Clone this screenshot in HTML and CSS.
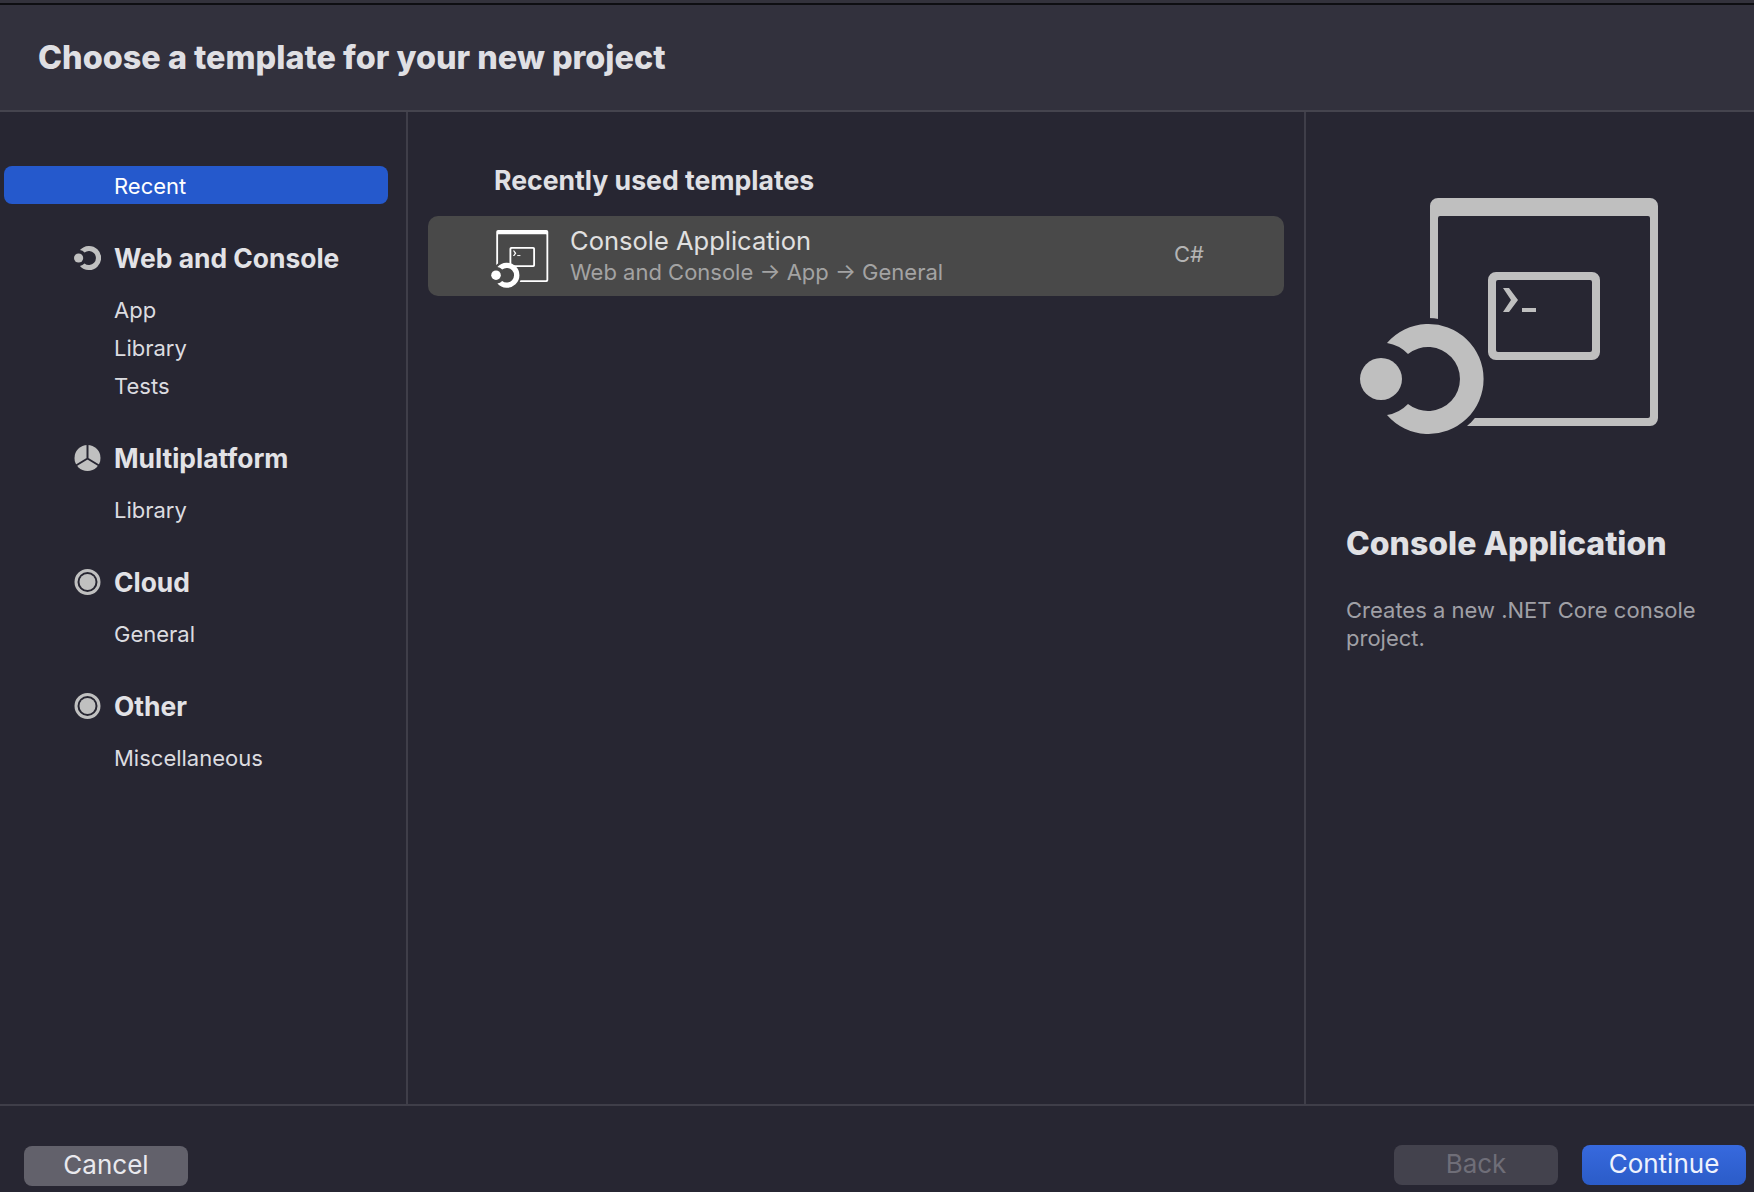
FILE: index.html
```html
<!DOCTYPE html>
<html lang="en">

<head>
    <meta charset="UTF-8">
    <meta name="viewport" content="width=device-width, initial-scale=1.0">
    <title>New Project</title>
    <link rel="stylesheet" href="styles.css">
</head>

<body>
    <svg class="defs" width="0" height="0">
        <defs>
            <mask id="preview-cut" maskUnits="userSpaceOnUse" x="-20" y="0" width="320" height="270">
                <rect x="-20" y="0" width="320" height="270" fill="#fff"></rect>
                <circle cx="58" cy="189" r="61" fill="#000"></circle>
            </mask>
            <mask id="card-cut" maskUnits="userSpaceOnUse" x="-20" y="0" width="320" height="270">
                <rect x="-20" y="0" width="320" height="270" fill="#fff"></rect>
                <circle cx="106" cy="206" r="64" fill="#000"></circle>
            </mask>
            <path id="window-frame" fill-rule="evenodd" d="M68 8H280a8 8 0 0 1 8 8V228a8 8 0 0 1 -8 8H68a8 8 0 0 1 -8 -8V16a8 8 0 0 1 8 -8ZM70 26a2 2 0 0 0 -2 2V226a2 2 0 0 0 2 2H278a2 2 0 0 0 2 -2V28a2 2 0 0 0 -2 -2Z"></path>
            <g id="terminal">
                <path fill-rule="evenodd" d="M126 82H222a8 8 0 0 1 8 8V162a8 8 0 0 1 -8 8H126a8 8 0 0 1 -8 -8V90a8 8 0 0 1 8 -8ZM128 90a2 2 0 0 0 -2 2V160a2 2 0 0 0 2 2H220a2 2 0 0 0 2 -2V92a2 2 0 0 0 -2 -2Z"></path>
                <path d="M133 98H139L148 110L139 122H133L141 110Z"></path>
                <rect x="152" y="118" width="14" height="4"></rect>
            </g>
            <g id="ring-shape">
                <circle cx="11" cy="189" r="21"></circle>
                <path d="M17 153A55 55 0 1 1 17 225A37 37 0 0 0 38 214A32 32 0 1 0 38 164A37 37 0 0 0 17 153Z"></path>
            </g>
            <symbol id="dotnet-ring" viewBox="-10 134 123 110">
                <use href="#ring-shape"></use>
            </symbol>
            <symbol id="console-preview" viewBox="-20 0 320 250">
                <use href="#window-frame" mask="url(#preview-cut)"></use>
                <use href="#terminal"></use>
                <use href="#ring-shape"></use>
            </symbol>
            <symbol id="console-card" viewBox="-20 0 320 270">
                <use href="#window-frame" mask="url(#card-cut)"></use>
                <use href="#terminal"></use>
                <use href="#ring-shape" transform="translate(48 17)"></use>
            </symbol>
        </defs>
    </svg>

    <div class="dialog">
        <div class="top-strip"></div>
        <header class="header">
            <h1 class="header-title">Choose a template for your new project</h1>
        </header>

        <main class="main">
            <nav class="sidebar">
                <div class="side-item selected">Recent</div>

                <div class="side-group">
                    <div class="side-heading">
                        <svg class="side-icon"><use href="#dotnet-ring"></use></svg>
                        Web and Console
                    </div>
                    <div class="side-item">App</div>
                    <div class="side-item">Library</div>
                    <div class="side-item">Tests</div>
                </div>

                <div class="side-group">
                    <div class="side-heading">
                        <svg class="side-icon" viewBox="0 0 27 26">
                            <circle cx="13.5" cy="13" r="13"></circle>
                            <path class="blade-gap" d="M13.5 0V13.5M13.5 13.5L2 20.5M13.5 13.5L25 20.5"></path>
                        </svg>
                        Multiplatform
                    </div>
                    <div class="side-item">Library</div>
                </div>

                <div class="side-group">
                    <div class="side-heading">
                        <svg class="side-icon" viewBox="0 0 27 26">
                            <circle class="target-ring" cx="13.5" cy="13" r="11.5"></circle>
                            <circle cx="13.5" cy="13" r="8"></circle>
                        </svg>
                        Cloud
                    </div>
                    <div class="side-item">General</div>
                </div>

                <div class="side-group">
                    <div class="side-heading">
                        <svg class="side-icon" viewBox="0 0 27 26">
                            <circle class="target-ring" cx="13.5" cy="13" r="11.5"></circle>
                            <circle cx="13.5" cy="13" r="8"></circle>
                        </svg>
                        Other
                    </div>
                    <div class="side-item">Miscellaneous</div>
                </div>
            </nav>

            <section class="templates">
                <h2 class="templates-title">Recently used templates</h2>
                <div class="template-card">
                    <svg class="template-icon"><use href="#console-card"></use></svg>
                    <div class="template-text">
                        <div class="template-name">Console Application</div>
                        <div class="template-path">Web and Console → App → General</div>
                    </div>
                    <div class="template-lang">C#</div>
                </div>
            </section>

            <aside class="preview">
                <svg class="preview-icon"><use href="#console-preview"></use></svg>
                <h2 class="preview-title">Console Application</h2>
                <p class="preview-text">Creates a new .NET Core console project.</p>
            </aside>
        </main>

        <footer class="footer">
            <button class="btn btn-cancel" type="button">Cancel</button>
            <div class="footer-right">
                <button class="btn btn-back" type="button">Back</button>
                <button class="btn btn-primary" type="button">Continue</button>
            </div>
        </footer>
    </div>
</body>

</html>
```

FILE: styles.css
```css
body {
    font-family: Inter, "Noto Sans", sans-serif;
    background-color: #272632;
    margin: 0;
    padding: 0;
}

.defs {
    display: block;
    height: 0;
    overflow: hidden;
}

.dialog {
    display: flex;
    flex-direction: column;
    height: 1192px;
}

.top-strip {
    height: 3px;
    background-color: #33323c;
    border-bottom: 2px solid #0e0e12;
}

.header {
    display: flex;
    align-items: center;
    height: 105px;
    padding-left: 38px;
    background-color: #32313d;
    border-bottom: 2px solid #45444e;
}

.header-title {
    margin: 0;
    font-size: 32.4px;
    font-weight: 800;
    color: #dfdfe3;
}

.main {
    display: flex;
    height: 992px;
    border-bottom: 2px solid #3f3e49;
}

.sidebar {
    width: 408px;
    flex-shrink: 0;
    padding: 54px 0 0 4px;
    box-sizing: border-box;
    border-right: 2px solid #3f3e49;
}

.side-item {
    height: 38px;
    line-height: 40px;
    padding-left: 110px;
    font-size: 22px;
    color: #dcdce0;
}

.selected {
    width: 384px;
    box-sizing: border-box;
    background-color: #2559cc;
    border-radius: 8px;
    color: #fff;
}

.side-group {
    margin-top: 34px;
}

.side-heading {
    display: flex;
    align-items: center;
    height: 38px;
    box-sizing: border-box;
    margin-bottom: 14px;
    padding: 2px 0 0 70px;
    gap: 13px;
    font-size: 26.4px;
    font-weight: 700;
    color: #e2e2e6;
}

.side-icon {
    width: 27px;
    height: 26px;
    fill: #c0c0c0;
}

.blade-gap {
    fill: none;
    stroke: #272632;
    stroke-width: 2;
}

.target-ring {
    fill: none;
    stroke: #c0c0c0;
    stroke-width: 3;
}

.templates {
    flex: 1;
    padding: 50px 20px 0;
    border-right: 2px solid #3f3e49;
}

.templates-title {
    margin: 0 0 17px 66px;
    height: 37px;
    line-height: 37px;
    font-size: 26.6px;
    font-weight: 700;
    color: #e0e0e4;
}

.template-card {
    display: flex;
    align-items: center;
    height: 80px;
    padding: 0 80px 0 50px;
    background-color: #494949;
    border-radius: 10px;
}

.template-icon {
    width: 73px;
    height: 62px;
    flex-shrink: 0;
    fill: #fff;
    margin: 6px 19px 0 0;
}

.template-text {
    flex: 1;
}

.template-name {
    font-size: 25.5px;
    line-height: 32px;
    color: #e0e0e0;
}

.template-path {
    font-size: 22px;
    line-height: 30px;
    color: #a3a3a3;
}

.template-lang {
    font-size: 22px;
    color: #b4b4b4;
    margin-bottom: 4px;
}

.preview {
    width: 448px;
    flex-shrink: 0;
    box-sizing: border-box;
    padding: 78px 40px 0 40px;
}

.preview-icon {
    display: block;
    width: 320px;
    height: 250px;
    margin-left: 4px;
    fill: #bfbfbf;
}

.preview-title {
    margin: 84px 0 0;
    font-size: 32px;
    font-weight: 800;
    color: #e0e0e4;
}

.preview-text {
    margin: 33px 0 0;
    font-size: 22px;
    line-height: 28px;
    color: #a0a0a6;
}

.footer {
    flex: 1;
    display: flex;
    justify-content: space-between;
    align-items: flex-start;
    padding: 39px 8px 0 24px;
}

.footer-right {
    display: flex;
    gap: 24px;
}

.btn {
    width: 164px;
    height: 40px;
    padding: 0 0 3px;
    border: none;
    border-radius: 8px;
    font-family: inherit;
    font-size: 26px;
    color: #e9e9ee;
}

.btn-cancel {
    margin-top: 1px;
    background-color: #62616b;
}

.btn-back {
    background-color: #43424d;
    color: #6f6e78;
}

.btn-primary {
    background: linear-gradient(#3769de, #2b5cc8);
    color: #eef2fd;
}
```
